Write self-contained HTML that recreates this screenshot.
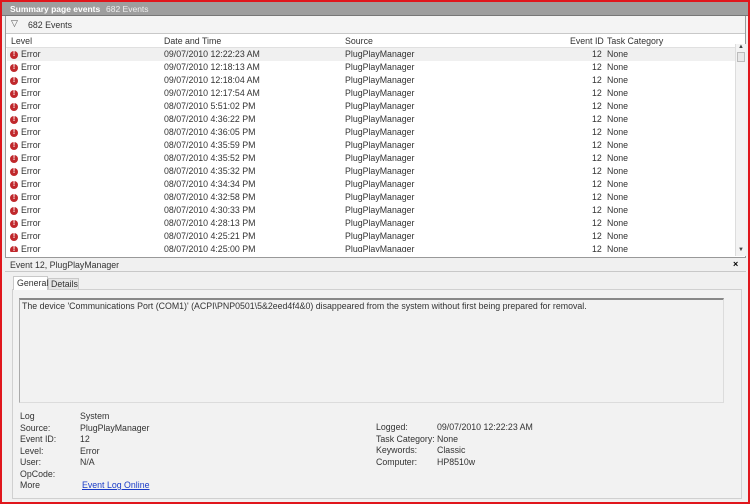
<!DOCTYPE html>
<html><head><style>
*{margin:0;padding:0;box-sizing:border-box}
body{width:750px;height:504px;overflow:hidden;background:#f0f0f0;font-family:"Liberation Sans",sans-serif;font-size:8.8px;color:#333;position:relative}
.a{position:absolute;white-space:nowrap}
.row{position:absolute;left:7px;width:728px;height:13px;line-height:13px}
.row span{position:absolute}
.ic{display:inline-block;width:8px;height:8px;border-radius:50%;background:#c0282c;position:absolute;left:3px;top:2.5px;color:#fff;font-size:7px;line-height:8px;text-align:center;font-weight:bold;font-style:normal}
</style></head><body>
<div class="a" style="left:0;top:0;width:750px;height:504px;border:2px solid #e0161c;z-index:10"></div>
<div class="a" style="left:2px;top:2px;width:746px;height:14px;background:#9e9e9e;border-bottom:1px solid #777"></div>
<div class="a" style="left:10px;top:3px;color:#fff;font-weight:bold;font-size:8.5px;line-height:12px">Summary page events</div>
<div class="a" style="left:106px;top:3px;color:#eee;font-size:8.5px;line-height:12px">682 Events</div>
<div class="a" style="left:5px;top:16px;width:741px;height:241px;background:#fff;border-left:1px solid #999;border-right:1px solid #999"></div>
<div class="a" style="left:6px;top:16px;width:739px;height:18px;background:#f4f4f4;border-bottom:1px solid #c8c8c8"></div>
<div class="a" style="left:11px;top:18px;font-size:9px;color:#555">▽</div>
<div class="a" style="left:28px;top:19px;line-height:12px">682 Events</div>
<div class="a" style="left:6px;top:35px;width:729px;height:13px;border-bottom:1px solid #e0e0e0;line-height:13px">
<span class="a" style="left:5px">Level</span><span class="a" style="left:158px">Date and Time</span><span class="a" style="left:339px">Source</span><span class="a" style="left:564px">Event ID</span><span class="a" style="left:601px">Task Category</span></div>
<div class="a" style="left:735px;top:44px;width:11px;height:212px;background:#f3f3f3;border-left:1px solid #ddd"></div>
<div class="a" style="left:738px;top:44px;font-size:6px;color:#444">▲</div>
<div class="a" style="left:738px;top:247px;font-size:6px;color:#444">▼</div>
<div class="a" style="left:737px;top:52px;width:8px;height:10px;border:1px solid #bbb;background:#e8e8e8"></div>
<div id="rows"></div>
<div class="a" style="left:5px;top:257px;width:741px;height:1px;background:#999"></div>
<div class="a" style="left:10px;top:259px;line-height:12px">Event 12, PlugPlayManager</div>
<div class="a" style="left:733px;top:259px;font-weight:bold;font-size:9px;color:#000">×</div>
<div class="a" style="left:5px;top:271px;width:741px;height:1px;background:#c8c8c8"></div>
<div class="a" style="left:12px;top:289px;width:730px;height:210px;border:1px solid #d0d0d0;background:#f2f2f2"></div>
<div class="a" style="left:13px;top:276px;width:35px;height:14px;background:#fff;border:1px solid #c8c8c8;border-bottom:none;padding-left:3px;line-height:13px">General</div>
<div class="a" style="left:48px;top:278px;width:31px;height:11px;background:#e6e6e6;border:1px solid #c8c8c8;border-bottom:none;padding-left:2px;line-height:11px">Details</div>
<div class="a" style="left:19px;top:298px;width:705px;height:105px;border:1px solid #dcdcdc;border-top:2px solid #888;border-left:1px solid #aaa"></div>
<div class="a" style="left:22px;top:301px;line-height:11px">The device 'Communications Port (COM1)' (ACPI\PNP0501\5&amp;2eed4f4&amp;0) disappeared from the system without first being prepared for removal.</div>
<div class="a" style="left:20px;top:411px;line-height:11.5px">Log<br>Source:<br>Event ID:<br>Level:<br>User:<br>OpCode:<br>More</div>
<div class="a" style="left:80px;top:411px;line-height:11.5px">System<br>PlugPlayManager<br>12<br>Error<br>N/A<br>&nbsp;</div>
<div class="a" style="left:82px;top:480px;line-height:11.5px;color:#1a3cc8;text-decoration:underline">Event Log Online </div>
<div class="a" style="left:376px;top:422px;line-height:11.5px">Logged:<br>Task Category:<br>Keywords:<br>Computer:</div>
<div class="a" style="left:437px;top:422px;line-height:11.5px">09/07/2010 12:22:23 AM<br>None<br>Classic<br>HP8510w</div>
<script>
var d=["09/07/2010 12:22:23 AM","09/07/2010 12:18:13 AM","09/07/2010 12:18:04 AM","09/07/2010 12:17:54 AM","08/07/2010 5:51:02 PM","08/07/2010 4:36:22 PM","08/07/2010 4:36:05 PM","08/07/2010 4:35:59 PM","08/07/2010 4:35:52 PM","08/07/2010 4:35:32 PM","08/07/2010 4:34:34 PM","08/07/2010 4:32:58 PM","08/07/2010 4:30:33 PM","08/07/2010 4:28:13 PM","08/07/2010 4:25:21 PM","08/07/2010 4:25:00 PM"];
var h="";for(var i=0;i<16;i++){var t=48+13*i;var hh=i==15?9:13;h+='<div class="row" style="top:'+t+'px;height:'+hh+'px;overflow:hidden;'+(i==0?'background:#f0f0f0;':'')+'"><i class="ic">!</i><span style="left:14px">Error</span><span style="left:157px">'+d[i]+'</span><span style="left:338px">PlugPlayManager</span><span style="left:585px">12</span><span style="left:600px">None</span></div>';}
document.getElementById("rows").innerHTML=h;
</script>
</body></html>
